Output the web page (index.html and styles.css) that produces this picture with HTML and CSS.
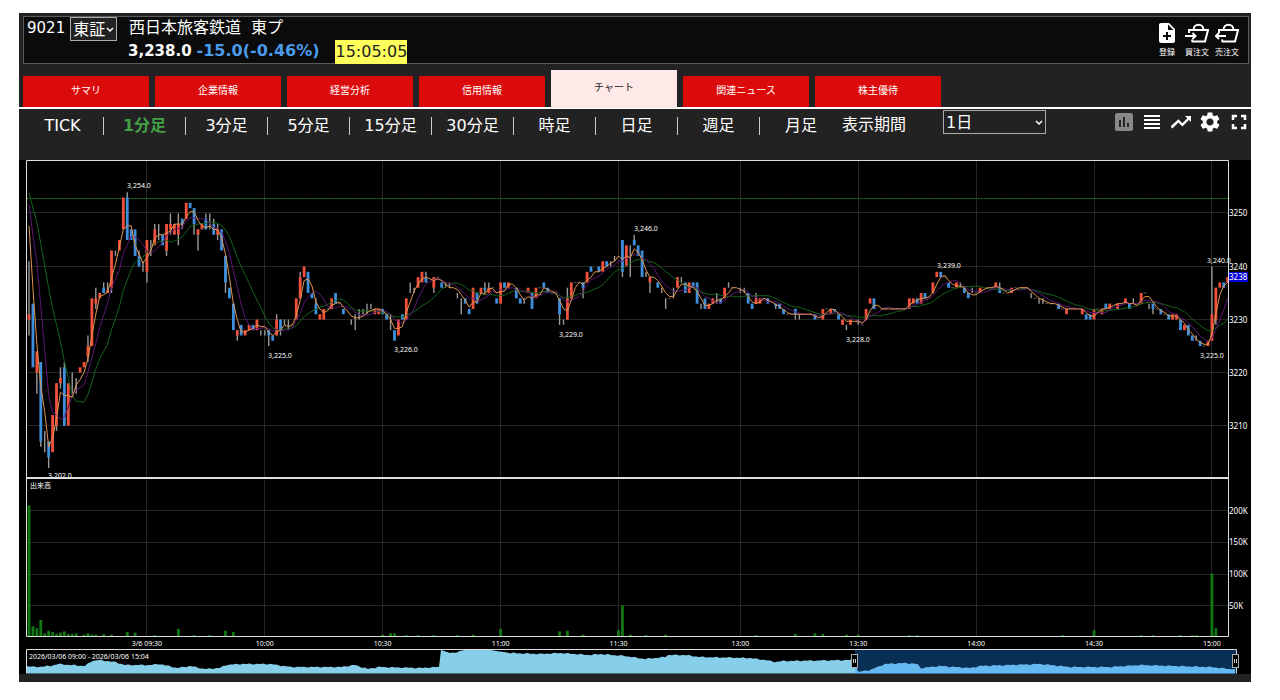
FILE: index.html
```html
<!DOCTYPE html>
<html lang="ja">
<head>
<meta charset="utf-8">
<title>9021 西日本旅客鉄道</title>
<link rel="stylesheet" href="styles.css">
</head>
<body>
<main class="app">
  <header class="quote">
    <div class="quote-code">
      <span class="code">9021</span>
      <span class="picker">
        <select class="market" aria-label="市場"><option>東証</option></select>
        <svg class="arrow" viewBox="0 0 8 6"><path d="M1 1l3 3 3-3"/></svg>
      </span>
    </div>
    <div class="quote-body">
      <h1 class="name"><span>西日本旅客鉄道</span><span>東プ</span></h1>
      <div class="prices">
        <span class="last">3,238.0</span>
        <span class="change">-15.0(-0.46%)</span>
        <time class="clock">15:05:05</time>
      </div>
    </div>
    <div class="actions">
      <button class="action" type="button">
        <svg viewBox="4 2 16 20" class="note"><path fill="currentColor" d="M14 2H6c-1.100 0-2 .9-2 2v16c0 1.100.9 2 2 2h12c1.100 0 2-.9 2-2V8l-6-6zm2 14h-3v3h-2v-3H8v-2h3v-3h2v3h3v2zm-3-7V3.500L18.500 9H13z"/></svg>
        <span>登録</span>
      </button>
      <button class="action" type="button">
        <svg viewBox="0 0 24 20" class="basket"><path d="M4 10V7h19l-3 11.500H7.500L7 16.500M8.500 7c0-7 10-7 10 0M0 13h10M7.500 10l3 3-3 3"/></svg>
        <span>買注文</span>
      </button>
      <button class="action" type="button">
        <svg viewBox="0 0 24 20" class="basket"><path d="M4 10V7h19l-3 11.500H7.500L7 16.500M8.500 7c0-7 10-7 10 0M11 13H1M4 10l-3 3 3 3"/></svg>
        <span>売注文</span>
      </button>
    </div>
  </header>

  <nav class="tabs">
    <a href="#summary" class="tab">サマリ</a>
    <a href="#company" class="tab">企業情報</a>
    <a href="#analysis" class="tab">経営分析</a>
    <a href="#credit" class="tab">信用情報</a>
    <a href="#chart" class="tab tab-active">チャート</a>
    <a href="#news" class="tab">関連ニュース</a>
    <a href="#benefit" class="tab">株主優待</a>
  </nav>

  <div class="toolbar">
    <div class="spans">
      <button type="button" class="span">TICK</button>
      <button type="button" class="span span-active">1分足</button>
      <button type="button" class="span">3分足</button>
      <button type="button" class="span">5分足</button>
      <button type="button" class="span">15分足</button>
      <button type="button" class="span">30分足</button>
      <button type="button" class="span">時足</button>
      <button type="button" class="span">日足</button>
      <button type="button" class="span">週足</button>
      <button type="button" class="span">月足</button>
    </div>
    <label class="period-label" for="period">表示期間</label>
    <span class="picker picker-period">
      <select id="period" class="period"><option>1日</option></select>
      <svg class="arrow" viewBox="0 0 8 6"><path d="M1 1l3 3 3-3"/></svg>
    </span>
    <div class="tools">
      <button type="button" class="tool tool-off" aria-label="チャート種類"><svg viewBox="3 3 18 18"><path fill="currentColor" d="M19 3H5c-1.100 0-2 .9-2 2v14c0 1.100.9 2 2 2h14c1.100 0 2-.9 2-2V5c0-1.100-.9-2-2-2zM9 17H7v-7h2v7zm4 0h-2V7h2v10zm4 0h-2v-4h2v4z"/></svg></button>
      <button type="button" class="tool" aria-label="一覧"><svg viewBox="0 0 20 20"><path fill="currentColor" d="M2 3h16v2H2zM2 7h16v2H2zM2 11h16v2H2zM2 15h16v2H2z"/></svg></button>
      <button type="button" class="tool" aria-label="指標"><svg viewBox="2 2 20 20"><path fill="currentColor" d="M16 6l2.290 2.290-4.880 4.880-4-4L1.500 16.500 3.400 18.500l6-6 4 4 6.400-6.400L22 12V6z"/></svg></button>
      <button type="button" class="tool" aria-label="設定"><svg viewBox="2 2 20 20"><path fill="currentColor" d="M19.140 12.940c.04-.3.06-.61.06-.94 0-.32-.02-.64-.07-.94l2.030-1.580c.18-.14.23-.41.12-.61l-1.920-3.320c-.12-.22-.37-.29-.59-.22l-2.390.96c-.5-.38-1.030-.7-1.620-.94l-.36-2.540c-.04-.24-.24-.41-.48-.41h-3.840c-.24 0-.43.17-.47.41l-.36 2.540c-.59.24-1.130.57-1.620.94l-2.390-.96c-.22-.08-.47 0-.59.22L2.740 8.870c-.12.21-.08.47.12.61l2.030 1.580c-.05.3-.09.63-.09.94s.02.64.07.94l-2.030 1.580c-.18.14-.23.41-.12.61l1.920 3.320c.12.22.37.29.59.22l2.390-.96c.5.38 1.030.7 1.620.94l.36 2.540c.05.24.24.41.48.41h3.840c.24 0 .44-.17.47-.41l.36-2.540c.59-.24 1.130-.56 1.620-.94l2.390.96c.22.08.47 0 .59-.22l1.920-3.320c.12-.22.07-.47-.12-.61l-2.010-1.580zM12 15.600c-1.980 0-3.600-1.620-3.600-3.600s1.620-3.600 3.600-3.600 3.600 1.620 3.600 3.600-1.620 3.600-3.600 3.600z"/></svg></button>
      <button type="button" class="tool" aria-label="全画面"><svg viewBox="0 0 20 20"><path fill="none" stroke="currentColor" stroke-width="2.500" d="M4 8V4h4M12 4h4v4M16 12v4h-4M8 16H4v-4"/></svg></button>
    </div>
  </div>

  <svg id="chart" class="chart" viewBox="19 160 1232 514" role="img" aria-label="1分足チャート"></svg>
</main>
<script src="chart.js"></script>
</body>
</html>
```
FILE: styles.css
```css
* { box-sizing: border-box; }

body {
  margin: 0;
  padding: 13px 29px 18px 19px;
  background: #fff;
  color: #fff;
  font-family: "DejaVu Sans", "Noto Sans CJK JP", sans-serif;
  font-size: 16px;
}

button, select {
  font: inherit;
  color: inherit;
}

button {
  margin: 0;
  padding: 0;
  border: 0;
  background: none;
  cursor: pointer;
}

.app {
  padding: 3px 0 8px;
  background: #222;
}

.quote {
  display: flex;
  margin: 0 2px 0 4px;
  border: 1px solid #5a5a5a;
  background: #0b0b0b;
}

.quote-code {
  display: flex;
  align-items: flex-start;
  gap: 5px;
  width: 104px;
  padding-left: 3px;
}

.code {
  font-size: 15px;
  line-height: 22px;
}

.picker {
  position: relative;
  display: block;
  width: 47px;
  height: 24px;
}

.picker select {
  display: block;
  width: 100%;
  height: 100%;
  padding: 0 2px;
  border: 1px solid #aaa;
  border-radius: 0;
  background: #222;
  appearance: none;
}

.arrow {
  position: absolute;
  top: 10px;
  right: 3px;
  width: 8px;
  height: 6px;
  fill: none;
  stroke: #fff;
  stroke-width: 1.5;
  pointer-events: none;
}

.quote-body { flex: 1; }

.name {
  display: flex;
  gap: 10px;
  margin: 0;
  padding-left: 1px;
  font-size: 16px;
  font-weight: 400;
  line-height: 22px;
}

.prices {
  display: flex;
  gap: 5px;
  font-weight: 700;
  line-height: 24px;
}

.last { font-size: 15px; }

.change { color: #4a9bea; }

.clock {
  margin: 1px 0 -1px 11px;
  background: #ffff5c;
  color: #222;
  font-weight: 400;
}

.actions {
  display: flex;
  gap: 6px;
  padding: 6px 9px 0 0;
}

.action {
  display: flex;
  flex-direction: column;
  align-items: center;
  justify-content: space-between;
  width: 24px;
  height: 36px;
  font-size: 8px;
  line-height: 12px;
  white-space: nowrap;
}

.note { width: 16px; height: 20px; }

.basket {
  width: 24px;
  height: 20px;
  fill: none;
  stroke: currentColor;
  stroke-width: 2;
}

.tabs {
  display: flex;
  align-items: flex-end;
  gap: 6px;
  margin-top: 6px;
  padding-left: 4px;
  border-bottom: 2px solid #fff;
}

.tab {
  width: 126px;
  height: 31px;
  background: #dc0b0b;
  color: #fff;
  font-size: 10px;
  line-height: 30px;
  text-align: center;
  text-decoration: none;
}

.tab-active {
  height: 38px;
  margin-bottom: -1px;
  background: #ffe8e8;
  color: #222;
  line-height: 36px;
}

.toolbar {
  display: flex;
  height: 51px;
  padding-right: 2px;
}

.spans {
  display: flex;
  padding: 8px 0 0 3px;
}

.span {
  width: 82px;
  height: 18px;
  line-height: 16px;
  border-right: 1px solid #ccc;
}

.span:nth-last-child(-n + 1) { border-right: 0; }

.span-active {
  color: #43a047;
  font-weight: 700;
}

.period-label {
  padding-top: 4px;
  line-height: 24px;
}

.picker-period {
  width: 103px;
  margin: 1px 0 0 37px;
}

.tools {
  display: flex;
  gap: 9px;
  height: 26px;
  margin-left: auto;
}

.tool {
  display: flex;
  align-items: center;
  width: 20px;
}

.tool svg { width: 20px; height: 20px; }

.tool-off {
  justify-content: flex-end;
  color: #888;
}

.tool-off svg { width: 18px; height: 18px; }

.chart {
  display: block;
  width: 100%;
  background: #000;
  font-family: "Noto Sans", "Noto Sans CJK JP", sans-serif;
  font-size: 7px;
}

.chart text { fill: #fff; }
.chart .axis { font-size: 8px; }
.chart .time { text-anchor: middle; }
.grid { stroke: #262626; }
.prev { stroke: #14821e; stroke-dasharray: 2 1; }
.frame { fill: none; stroke: #ddd; }
.divider { stroke: #ddd; stroke-width: 2; }
.wick { stroke: #999; stroke-width: 1.4; }
.flat { stroke: #555; }
.up { fill: #f0503c; }
.down { fill: #3d8fdc; }
.ma { fill: none; stroke-width: 1; }
.ma-short { stroke: #e09450; }
.ma-mid { stroke: #5e1674; }
.ma-long { stroke: #14641a; }
.volume { fill: #127812; }
.badge { fill: #0000d8; }
.nav-area { fill: #87ceeb; }
.nav-range { fill: #1e90ff; fill-opacity: 0.33; }
.handle { fill: #000; stroke: #aaa; }
.grip { stroke: #ccc; }
```
FILE: chart.js
```javascript
const NS = 'http://www.w3.org/2000/svg';
const chart = document.getElementById('chart');

function add(tag, attrs, text) {
  const el = document.createElementNS(NS, tag);
  for (const key in attrs) el.setAttribute(key, attrs[key]);
  if (text !== undefined) el.textContent = text;
  chart.appendChild(el);
  return el;
}

const LEFT = 26.5, RIGHT = 1228.5, TOP = 160.5, SPLIT = 478, BOTTOM = 636.5;
const xAt = i => 29 + i * 3.93;
const yAt = price => 266.5 + (3240 - price) * 5.305;

// [minute, open, close, high, low] as offsets from 3200; high and low default to the body.
const bars = [
  [0,30,31,41,27],[1,33,21],[2,20,24,24,16],[3,22,7,22,6],[4,7,7,9,5],[5,7,4,7,2],[6,5,12],[7,10,18,18,9],
  [8,18,19,21,17],[9,21,10,22,10],[10,10,18],[11,18,18,20,16],[12,17,17,19,16],[13,20,21],[14,21,22],
  [15,23,25,27,22],[16,25,34],[17,33,34,36,32],[18,34,35],[19,36,35,37,35],[20,35,35.5,37,35],[21,36,43,43,35],
  [22,43,43,43,42],[23,43,45],[24,47,53],[25,53,45,54,45],[26,47,45],[27,47,42],[28,42,40,43,40],[29,40,40,41,39],
  [30,39,45,45,37],[31,44,44,45,42],[32,44,47,48,44],[33,47,47,48,45],[34,46,44],[35,43,48,48,42],[36,47,48,50,46],
  [37,46,48],[38,46,48,50,44],[39,49,48,49,47],[40,49,52],[41,52,51],[42,51,48,51,46],[43,46,47,47,43],[44,47,48],
  [45,49,47,50,47],[46,48,48,50,47],[47,48,46,49,46],[48,46,47,48,45],[49,47,43],[50,42,37,42,35],[51,36,34],
  [52,33,28],[53,27,28,28,26],[54,29,27],[55,27,28],[56,28,29],[57,29,28],[58,28,30],[59,28,28,28,27],
  [60,28,28,28,27],[61,28,27,28,25],[62,27,26],[63,27,30,31,27],[64,30,28,30,27],[65,29,29,30,29],[66,29,29,30,28],
  [68,30,34],[69,34,38,39,34],[70,38,40],[71,39,35],[72,35,34],[73,33,31,34,31],[74,30,31],[75,30,32],
  [77,32,34],[78,35,33],[80,32,31],[82,30,30,30,29],[83,30,30,31,28],[84,31,31,32,30],[85,31,31,32,31],
  [86,32,32,33,31],[87,32,32,33,32],[88,31,32],[89,31,32],[90,32,31],[91,31,30],[92,29,29,31,28],[93,28,26],
  [94,27,30],[95,31,30],[96,30,34],[97,36,36,37,35],[98,36,36,36,35],[99,36,38],[100,37,39],[101,38,37,39,37],
  [103,36,38,38,35],[105,37,36],[106,36,36,37,36],[107,36,36,37,36],[109,35,35,35,34],[110,33,33,34,31],
  [111,34,33],[112,32,31],[113,32,36],[114,35,33],[115,35,36],[116,36,35.5,37,35],[117,35,36,37,35],[119,34,33],
  [120,33,37],[121,37,36],[122,36,37],[124,36,34],[125,34,33],[126,34,34,34,33],[127,35,36],[128,35,32],
  [129,34,36],[131,37,36],[132,36,35],[135,34,31,34,29],[136,30,30,30,29],[137,30,34,36,30],[138,34,37],
  [141,37,36,37,34],[142,37,39],[143,40,39],[145,40,39],[146,39,41],[147,41,40],[148,41,41,41,40],[149,42,42,42,41],
  [150,43,43],[151,45,39,45,38],[152,40,44],[153,42,42,44,38],[154,45,44,46,44],[155,44,42],[156,43,38],
  [157,38,38,39,38],[158,37,38,38,35],[160,37,36],[161,35,35,36,35],[162,34,34,34,32],[164,35,35,36,34],
  [165,36,38],[166,37,37,38,37],[167,37,35],[168,35,37],[169,37,36],[170,37,33],[171,33,33,33,32],[172,34,32],
  [173,32,33],[174,33,34],[175,34,34,35,33],[176,34,33],[177,34,36],[178,36,36,37,36],[181,35,35,36,35],
  [182,35,35,36,35],[183,35,33],[184,33,32],[185,33,34,35,33],[186,33,34],[188,34,33],[190,33,32.5,33,32],
  [191,33,32],[192,32,31],[195,32,31,32,30],[196,31,31,31,30],[200,31,30],[202,30,32],[204,31,32],[205,32,31.5],
  [206,31,30],[207,29,30],[208,29,29,29,28],[209,29,30],[211,29,29,30,29],[213,30,32],[214,33,34],[215,34,32],
  [224,32,34],[225,33,34],[226,34,33],[227,33,35],[228,35,34],[230,35,37],[231,38,39],[232,39,38],[234,37,36],
  [236,36,37],[237,36,36,37,36],[238,36,35],[239,35,34],[240,35,35,36,35],[242,35,36],[246,36,37],[247,36,35,37,35],
  [250,35,36],[255,34,34,35,34],[257,34,34,34,33],[258,33,33,34,33],[262,33,32],[264,31,32],[268,31,32],
  [269,31,30],[270,31,30],[271,30,32],[273,31,32],[274,33,32],[275,32,33],[277,32,33],[279,33,34],[280,33,32],
  [281,33,33,34,33],[283,33,35],[285,33,33,33,32],[286,33,32,33,31],[288,32,31],[290,31,30],[291,30,31],
  [292,30,31],[293,30,28],[294,28,29],[295,29,27],[296,27,26],[297,26,26,27,26],[298,26,25],[300,25,26],
  [301,26,31,40,26],[302,30,36,36,29],[303,36,37],[304,37,36],[305,37,38]
];

// Volumes by minute, in thousands of shares.
const volumes = {
  0:206,1:16,2:13,3:26,4:5,5:9,6:7,7:4,8:6,9:8,10:4,11:4,12:5,14:3,15:5,16:3,17:3,19:4,21:3,25:7,27:6,32:2,
  38:12,42:2,46:2,50:9,52:7,90:3,92:5,93:5,96:2,99:2,103:2,109:2,113:3,120:12,135:8,137:9,141:3,150:10,151:49,
  153:3,157:2,162:3,185:2,195:4,200:5,202:4,208:3,211:3,224:2,226:2,263:2,271:10,283:2,286:2,293:2,296:2,297:2,301:99,302:13
};

// Grid
for (const p of [3250, 3240, 3230, 3220, 3210]) add('path', { class: 'grid', d: `M${LEFT} ${Math.round(yAt(p)) - 0.5}H${RIGHT}` });
for (const k of [50, 100, 150, 200]) add('path', { class: 'grid', d: `M${LEFT} ${Math.round(637 - k * 0.634) + 0.5}H${RIGHT}` });
const times = [['3/6 09:30', 30], ['10:00', 60], ['10:30', 90], ['11:00', 120], ['11:30', 150], ['13:00', 181], ['13:30', 211], ['14:00', 241], ['14:30', 271], ['15:00', 301]];
for (const [label, i] of times) {
  add('path', { class: 'grid', d: `M${Math.floor(xAt(i)) + 0.5} ${TOP}V${BOTTOM}` });
  add('text', { class: 'time', x: xAt(i), y: 646 }, label);
}
add('path', { class: 'prev', d: `M${LEFT} 198.500H${RIGHT}` });

// Candles
const closes = [];
const known = new Map(bars.map(b => [b[0], b]));
for (let i = 0; i <= 305; i++) {
  const bar = known.get(i);
  if (!bar) {
    const c = closes[i - 1];
    closes.push(c);
    if (i % 3) add('path', { class: 'flat', d: `M${xAt(i) - 1.5} ${yAt(c)}h3` });
    continue;
  }
  const [, o, c, h = Math.max(o, c), l = Math.min(o, c)] = bar;
  closes.push(3200 + c);
  if (h > Math.max(o, c) || l < Math.min(o, c)) add('path', { class: 'wick', d: `M${xAt(i)} ${yAt(3200 + h)}V${yAt(3200 + l)}` });
  if (o !== c) {
    const top = yAt(3200 + Math.max(o, c));
    add('rect', { class: c > o ? 'up' : 'down', x: xAt(i) - 1.4, y: top, width: 2.8, height: Math.abs(o - c) * 5.305 });
  }
}

// Moving averages
for (const [n, name] of [[12, 'long'], [6, 'mid'], [3, 'short']]) {
  const points = closes.map((_, i) => {
    let sum = 0;
    for (let k = 0; k < n; k++) sum += i - k >= 0 ? closes[i - k] : 3256;
    return `${xAt(i).toFixed(1)},${yAt(sum / n).toFixed(1)}`;
  });
  add('polyline', { class: `ma ma-${name}`, points: points.join(' ') });
}

for (const i in volumes) {
  const h = volumes[i] * 0.636;
  add('rect', { class: 'volume', x: xAt(+i) - 1.4, y: BOTTOM - h, width: 2.8, height: h });
}

// Turning points
const marks = [['3,254.0', 127, 188], ['3,202.0', 48, 478], ['3,225.0', 268, 358], ['3,226.0', 394, 352], ['3,229.0', 559, 337],
  ['3,246.0', 634, 231], ['3,228.0', 846, 342], ['3,239.0', 937, 268], ['3,240.0', 1207, 263], ['3,225.0', 1200, 358]];
for (const [label, x, y] of marks) add('text', { x, y }, label);

// Frames and scales
add('rect', { x: 27, y: 478, width: 1201, height: 2, fill: '#000' });
add('path', { class: 'frame', d: `M${LEFT} ${TOP}H${RIGHT}V${BOTTOM}H${LEFT}Z` });
add('path', { class: 'divider', d: `M26 ${SPLIT}H1229` });
add('text', { x: 30, y: 488 }, '出来高');
for (const p of [3250, 3240, 3230, 3220, 3210]) add('text', { class: 'axis', x: 1229, y: yAt(p) + 3 }, p);
for (const k of [50, 100, 150, 200]) add('text', { class: 'axis', x: 1229, y: 640.5 - k * 0.634 }, k + 'K');
add('rect', { class: 'badge', x: 1229, y: 272, width: 19, height: 10 });
add('text', { class: 'axis', x: 1229, y: 280 }, '3238');

// Range navigator
const shape = [[27,666],[35,667],[50,666],[58,664],[85,666],[92,661],[98,660],[115,662],[125,665],[150,665],[160,664],[177,668],
  [190,666],[205,669],[220,668],[226,665],[240,664],[270,664],[290,667],[340,667],[355,665],[368,669],[378,667],[420,668],
  [439,667],[441,650],[450,653],[458,652],[464,650],[490,650],[510,653],[540,654],[560,653],[590,655],[600,654],[625,656],
  [645,659],[665,657],[668,655],[685,655],[700,657],[750,658],[765,660],[776,662],[783,661],[855,660],[858,672],[870,670],
  [885,664],[905,663],[917,664],[921,668],[940,666],[970,668],[980,666],[1040,664],[1070,667],[1110,667],[1140,665],
  [1210,667],[1230,669],[1236,669]];
let area = 'M27 673.5';
for (let s = 0; s < shape.length - 1; s++) {
  const [x0, y0] = shape[s], [x1, y1] = shape[s + 1];
  for (let x = x0; x < x1; x++) {
    const ripple = y0 > 651 ? Math.sin(x * 0.7) * Math.sin(x * 0.23) * 0.6 : 0;
    area += `L${x} ${(y0 + (y1 - y0) * (x - x0) / (x1 - x0) + ripple).toFixed(1)}`;
  }
}
add('path', { class: 'nav-area', d: area + 'V673.500Z' });
add('rect', { class: 'nav-range', x: 855, y: 650, width: 381, height: 24 });
add('path', { class: 'frame', d: 'M26.500 673.500V649.500H1236.500V673.500' });
add('text', { x: 29, y: 659 }, '2026/03/06 09:00 - 2026/03/06 15:04');
for (const x of [855, 1236]) {
  add('rect', { class: 'handle', x: x - 3.5, y: 654.5, width: 6, height: 13 });
  add('path', { class: 'grip', d: `M${x - 1.5} 659v4M${x + 0.5} 659v4` });
}
```
